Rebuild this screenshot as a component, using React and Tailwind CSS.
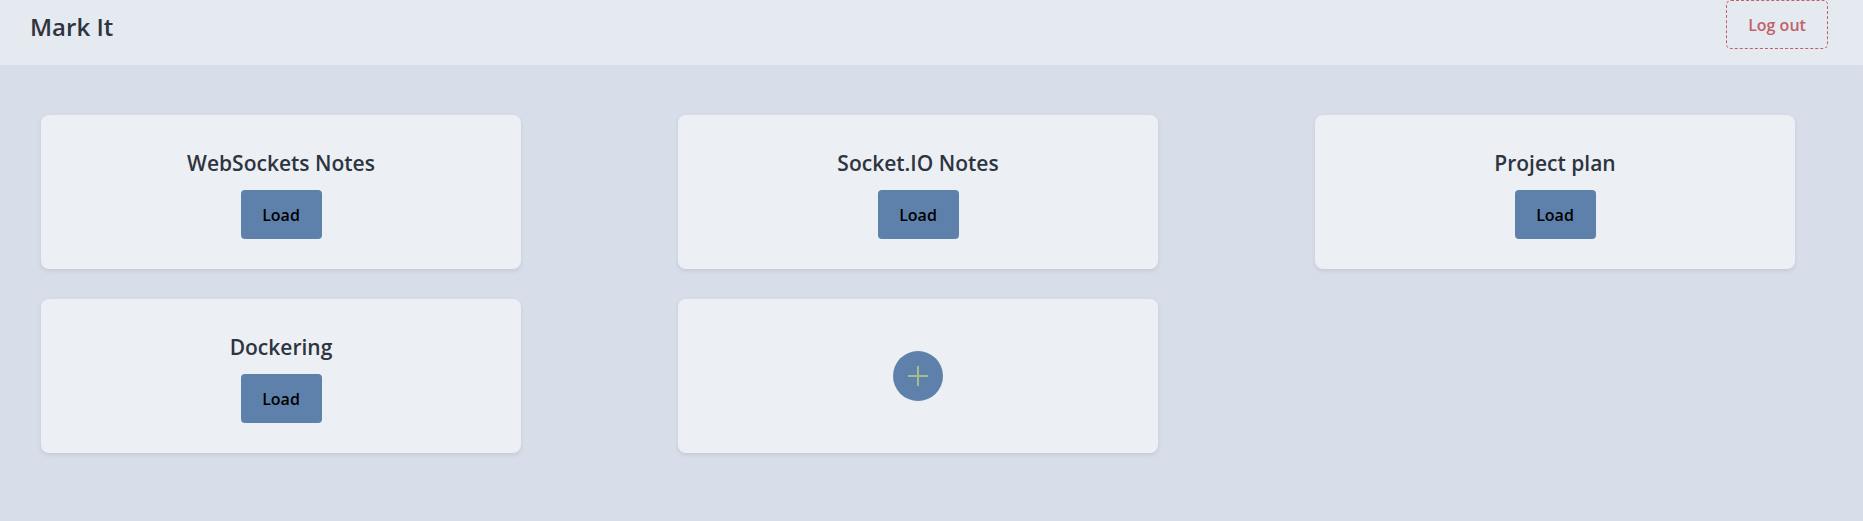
import React from 'react';

const notes = ['WebSockets Notes', 'Socket.IO Notes', 'Project plan', 'Dockering'];

const NoteCard = ({ title }) => (
  <div className="h-[154px] w-[480px] pt-[4px] rounded-lg bg-[#eceff4] shadow-[0_2px_4px_rgba(46,52,64,0.12)] flex flex-col items-center justify-center">
    <h2 className="text-[21px] font-semibold text-[#2e3440] leading-7">{title}</h2>
    <button className="mt-[13px] h-[49px] w-[81px] rounded-[4px] bg-[#5e81ac] text-base font-semibold text-black">
      Load
    </button>
  </div>
);

const AddCard = () => (
  <div className="h-[154px] w-[480px] rounded-lg bg-[#eceff4] shadow-[0_2px_4px_rgba(46,52,64,0.12)] flex items-center justify-center">
    <button className="w-[50px] h-[50px] rounded-full bg-[#5e81ac] flex items-center justify-center">
      <svg width="20" height="20" viewBox="0 0 20 20">
        <line x1="0" y1="10" x2="20" y2="10" stroke="#a3be8c" strokeWidth="2" />
        <line x1="10" y1="0" x2="10" y2="20" stroke="#a3be8c" strokeWidth="2" />
      </svg>
    </button>
  </div>
);

const App = () => {
  return (
    <div className="min-h-screen bg-[#d8dee9] font-['Open_Sans',sans-serif]">
      {/* Header */}
      <header className="h-[65px] bg-[#e5e9f0] flex items-start justify-between pl-[30px] pr-[35px]">
        <h1 className="mt-[11px] text-2xl font-semibold text-[#2e3440] leading-8">Mark It</h1>
        <button className="h-[49px] w-[102px] rounded-[5px] border border-dashed border-[#bf616a] text-base font-semibold text-[#bf616a]">
          Log out
        </button>
      </header>

      {/* Notes grid */}
      <main className="px-[41px] pt-[50px] pb-[60px] grid grid-cols-[repeat(3,480px)] gap-x-[157px] gap-y-[30px]">
        {notes.map((note, index) => (
          <NoteCard key={index} title={note} />
        ))}
        <AddCard />
      </main>
    </div>
  );
};

export default App;
